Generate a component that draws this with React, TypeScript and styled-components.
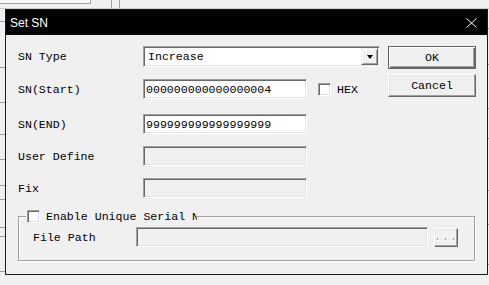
import React, { FC } from 'react';
import styled, { createGlobalStyle, css } from 'styled-components';

const GlobalStyle = createGlobalStyle`
  html, body {
    margin: 0;
    padding: 0;
    background: #f0f0f0;
    overflow: hidden;
  }
`;

const mono = `"Liberation Mono", "DejaVu Sans Mono", monospace`;

// ---- the application behind the dialog ----

const Desk = styled.div`
  position: relative;
  width: 489px;
  height: 285px;
  background: #f0f0f0;
  overflow: hidden;
  display: flex;
  flex-direction: column;
`;

const BackToolbar = styled.div`
  display: flex;
  height: 8px;
  border-bottom: 1px solid #c8c8c8;
`;

const BackCell = styled.div<{ $w: number; $top?: boolean }>`
  width: ${ p => p.$w }px;
  border-right: 1px solid #a0a0a0;
  ${ p => p.$top && css`
    height: 3px;
    background: #f8f8f8;
    border-bottom: 1px solid #a0a0a0;
  ` }
`;

const BackMain = styled.div`
  flex: 1;
  display: flex;
  justify-content: space-between;
`;

const BackColumn = styled.div`
  width: 5px;
  display: flex;
  flex-direction: column;
`;

const BackRow = styled.div<{ $h: number }>`
  height: ${ p => p.$h }px;
  border-bottom: 1px solid #a0a0a0;
  box-sizing: border-box;
`;

// ---- the dialog ----

const Window = styled.div`
  position: absolute;
  left: 5px;
  top: 9px;
  width: 483px;
  height: 266px;
  box-sizing: border-box;
  border: 1px solid #1a1a1a;
  background: #f0f0f0;
  display: flex;
  flex-direction: column;
`;

const TitleBar = styled.div`
  height: 25px;
  background: #000;
  color: #fff;
  display: flex;
  align-items: center;
  justify-content: space-between;
  padding: 0 10px 0 4px;
  font: 12px "Liberation Sans", Arial, sans-serif;
`;

const Body = styled.div`
  padding: 11px 11px 0 12px;
  display: flex;
  flex-direction: column;
  font-family: ${ mono };
  font-size: 11.6px;
  color: #000;
`;

const TopArea = styled.div`
  display: flex;
  gap: 8px;
`;

const Form = styled.div`
  width: 362px;
  display: flex;
  flex-direction: column;
`;

const Row = styled.div<{ $mt: number; $h: number }>`
  display: grid;
  grid-template-columns: 125px auto;
  align-items: center;
  margin-top: ${ p => p.$mt }px;
  height: ${ p => p.$h }px;
`;

const Label = styled.span`
  white-space: nowrap;
`;

const sunken = css`
  box-sizing: border-box;
  border: 1px solid;
  border-color: #a0a0a0 #fff #fff #a0a0a0;
  box-shadow: inset 1px 1px #696969, inset -1px -1px #e3e3e3;
`;

const Field = styled.div<{ $w: number; $disabled?: boolean }>`
  ${ sunken };
  width: ${ p => p.$w }px;
  height: 20px;
  background: ${ p => p.$disabled ? '#f0f0f0' : '#fff' };
  display: flex;
  align-items: center;
  padding-left: 2px;
  white-space: nowrap;
  overflow: hidden;
`;

const FieldWithCheck = styled.div`
  display: flex;
  align-items: center;
`;

const Combo = styled.div`
  ${ sunken };
  width: 237px;
  height: 21px;
  background: #fff;
  display: flex;
  align-items: center;
  justify-content: space-between;
  padding: 0 1px 0 4px;
`;

const DropButton = styled.div`
  box-sizing: border-box;
  width: 17px;
  height: 17px;
  background: #f0f0f0;
  border: 1px solid;
  border-color: #f0f0f0 #696969 #696969 #f0f0f0;
  box-shadow: inset 1px 1px #fff, inset -1px -1px #a0a0a0;
  display: flex;
  align-items: center;
  justify-content: center;
`;

const Arrow = styled.div`
  width: 0;
  height: 0;
  border-left: 3.5px solid transparent;
  border-right: 3.5px solid transparent;
  border-top: 4px solid #000;
`;

const CheckBox = styled.span<{ $ml?: number }>`
  ${ sunken };
  display: inline-block;
  flex: none;
  width: 13px;
  height: 13px;
  background: #fff;
  margin-left: ${ p => p.$ml ?? 0 }px;
`;

const CheckText = styled.span`
  margin-left: 6px;
`;

const Buttons = styled.div`
  display: flex;
  flex-direction: column;
  gap: 5px;
`;

const Button = styled.div<{ $default?: boolean; $w?: number; $h?: number }>`
  box-sizing: border-box;
  width: ${ p => p.$w ?? 88 }px;
  height: ${ p => p.$h ?? 23 }px;
  background: #f0f0f0;
  display: flex;
  align-items: center;
  justify-content: center;
  border: 1px solid;
  border-color: #fff #696969 #696969 #fff;
  box-shadow: inset -1px -1px #a0a0a0, inset 1px 1px #e3e3e3;
  ${ p => p.$default && css`
    border-color: #646464;
    box-shadow: inset 1px 1px #fff, inset -1px -1px #696969, inset -2px -2px #a0a0a0;
  ` }
`;

const DisabledDots = styled.span`
  color: #a0a0a0;
  letter-spacing: 1px;
  text-shadow: 1px 1px #fff;
  margin-top: -2px;
`;

const Group = styled.div`
  position: relative;
  margin-top: 18px;
  width: 457px;
  height: 45px;
  box-sizing: border-box;
  border: 1px solid #a0a0a0;
  box-shadow: inset 1px 1px #fff, 1px 1px #fff;
  padding: 10px 0 0 14px;
  display: flex;
  align-items: flex-start;
`;

const Legend = styled.div`
  position: absolute;
  left: 7px;
  top: -8px;
  width: 171px;
  height: 14px;
  background: #f0f0f0;
  display: flex;
  align-items: center;
  overflow: hidden;
  white-space: nowrap;
`;

const GroupRow = styled.div`
  display: flex;
  align-items: center;
`;

const GroupLabel = styled.span`
  width: 103px;
`;

const CloseIcon: FC = () => (
  <svg width="11" height="10" viewBox="0 0 11 10">
    <path d="M0.5 0.5 L10.5 9.5 M10.5 0.5 L0.5 9.5" stroke="#fff" strokeWidth="1" fill="none" />
  </svg>
);

const leftRows = [13, 46, 35, 32, 25, 26, 14, 28, 9, 35];
const rightRows = [20, 36, 44, 30, 52, 34, 40];

const App: FC = () => (
  <>
    <GlobalStyle />
    <Desk>
      <BackToolbar>
        <BackCell $w={ 90 } $top />
        <BackCell $w={ 20 } />
        <BackCell $w={ 7 } />
      </BackToolbar>
      <BackMain>
        <BackColumn>
          { leftRows.map((h, i) => <BackRow key={ i } $h={ h } />) }
        </BackColumn>
        <BackColumn>
          { rightRows.map((h, i) => <BackRow key={ i } $h={ h } />) }
        </BackColumn>
      </BackMain>

      <Window>
        <TitleBar>
          <span>Set SN</span>
          <CloseIcon />
        </TitleBar>
        <Body>
          <TopArea>
            <Form>
              <Row $mt={ 0 } $h={ 21 }>
                <Label>SN Type</Label>
                <Combo>
                  <span>Increase</span>
                  <DropButton><Arrow /></DropButton>
                </Combo>
              </Row>
              <Row $mt={ 12 } $h={ 20 }>
                <Label>SN(Start)</Label>
                <FieldWithCheck>
                  <Field $w={ 164 }>000000000000000004</Field>
                  <CheckBox $ml={ 11 } />
                  <CheckText>HEX</CheckText>
                </FieldWithCheck>
              </Row>
              <Row $mt={ 15 } $h={ 20 }>
                <Label>SN(END)</Label>
                <Field $w={ 164 }>999999999999999999</Field>
              </Row>
              <Row $mt={ 12 } $h={ 20 }>
                <Label>User Define</Label>
                <Field $w={ 164 } $disabled />
              </Row>
              <Row $mt={ 12 } $h={ 20 }>
                <Label>Fix</Label>
                <Field $w={ 164 } $disabled />
              </Row>
            </Form>
            <Buttons>
              <Button $default>OK</Button>
              <Button>Cancel</Button>
            </Buttons>
          </TopArea>

          <Group>
            <Legend>
              <CheckBox $ml={ 1 } />
              <CheckText>Enable Unique Serial No</CheckText>
            </Legend>
            <GroupRow>
              <GroupLabel>File Path</GroupLabel>
              <Field $w={ 292 } $disabled />
              <Button $w={ 24 } $h={ 19 } style={ { marginLeft: 6 } }>
                <DisabledDots>...</DisabledDots>
              </Button>
            </GroupRow>
          </Group>
        </Body>
      </Window>
    </Desk>
  </>
);

export default App;
